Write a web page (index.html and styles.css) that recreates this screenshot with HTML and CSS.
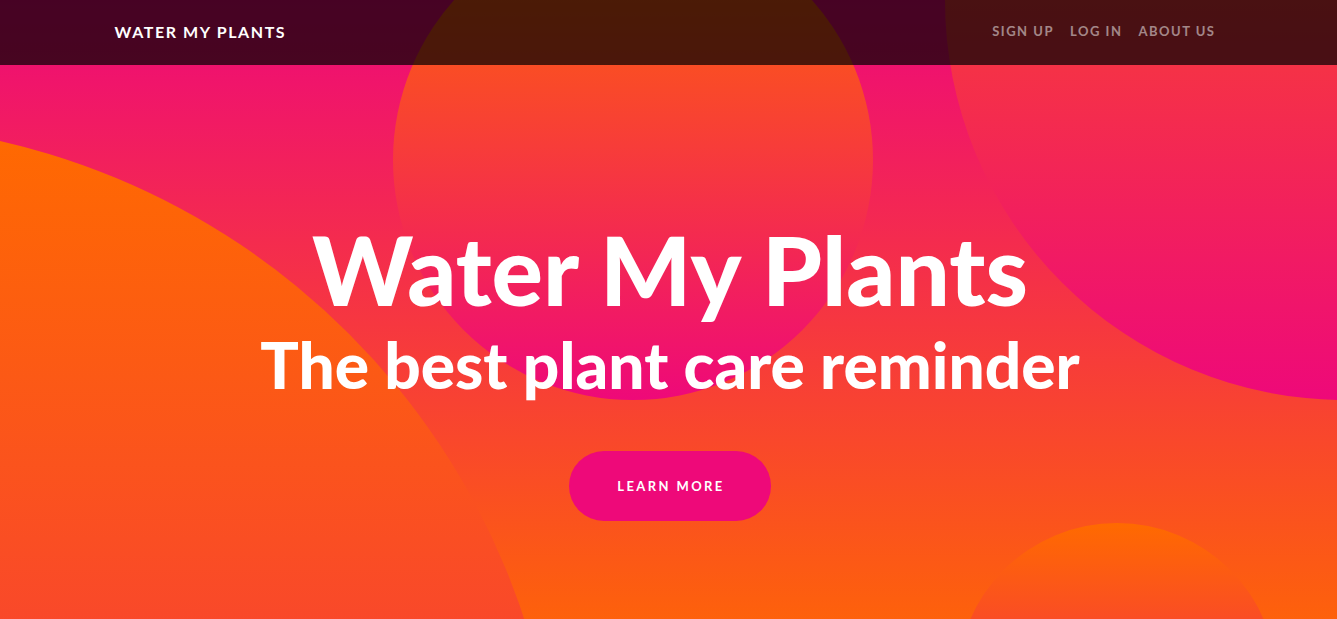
FILE: index.html
```html
<!DOCTYPE html>
<html lang="en">
<head>
<meta charset="utf-8">
<title>Water My Plants</title>
<link rel="stylesheet" href="styles.css">
</head>
<body>
<header class="masthead">
  <div class="bg-circle bg-circle-1"></div>
  <div class="bg-circle bg-circle-2"></div>
  <div class="bg-circle bg-circle-3"></div>
  <div class="bg-circle bg-circle-4"></div>
  <div class="masthead-content">
    <h1 class="masthead-heading">Water My Plants</h1>
    <h2 class="masthead-subheading">The best plant care reminder</h2>
    <a class="btn-learn" href="#">Learn More</a>
  </div>
</header>
<nav class="navbar">
  <div class="nav-container">
    <a class="brand" href="#">Water My Plants</a>
    <ul class="nav-links">
      <li><a href="#">Sign Up</a></li>
      <li><a href="#">Log In</a></li>
      <li><a href="#">About Us</a></li>
    </ul>
  </div>
</nav>
</body>
</html>
```

FILE: styles.css
```css
* { box-sizing: border-box; }
html, body { margin: 0; padding: 0; }
body {
  font-family: Lato, "Liberation Sans", sans-serif;
  background: #fff;
  overflow: hidden;
}
a { text-decoration: none; }

.navbar {
  position: absolute;
  top: 0; left: 0; right: 0;
  height: 65px;
  background: rgba(0, 0, 0, 0.7);
  z-index: 10;
}
.nav-container {
  width: 1140px;
  margin: 0 auto;
  height: 100%;
  padding: 0 15px 1px 16px;
  display: flex;
  align-items: center;
  justify-content: space-between;
}
.brand {
  color: #fff;
  font-weight: 700;
  font-size: 16px;
  letter-spacing: 1.6px;
  text-transform: uppercase;
  line-height: 1;
}
.nav-links {
  list-style: none;
  margin: 0;
  padding: 0 0 2px;
  display: flex;
}
.nav-links a {
  display: block;
  padding: 0 8px;
  color: rgba(255, 255, 255, 0.5);
  font-weight: 700;
  font-size: 13px;
  letter-spacing: 1.5px;
  text-transform: uppercase;
  line-height: 1;
}

.masthead {
  position: relative;
  overflow: hidden;
  height: 683px;
  padding-top: 211px;
  padding-left: 3px;
  background: linear-gradient(0deg, #ff6a00 0%, #ee0979 100%);
}
.bg-circle {
  position: absolute;
  border-radius: 100%;
  background: linear-gradient(0deg, #ee0979 0%, #ff6a00 100%);
  z-index: 0;
}
.bg-circle-1 { width: 1440px; height: 1440px; bottom: -880px; left: -880px; }
.bg-circle-2 { width: 800px; height: 800px; top: -400px; right: -408px; }
.bg-circle-3 { width: 320px; height: 320px; bottom: -160px; right: calc(5% - 7px); }
.bg-circle-4 { width: 480px; height: 480px; top: -80px; right: calc(35% - 4px); }

.masthead-content {
  position: relative;
  z-index: 1;
  display: flex;
  flex-direction: column;
  align-items: center;
  text-align: center;
  color: #fff;
}
.masthead-heading {
  margin: 0;
  font-family: Lato, sans-serif;
  font-weight: 900;
  font-size: 96px;
  line-height: 115px;
}
.masthead-subheading {
  margin: 0;
  font-family: Lato, sans-serif;
  font-weight: 900;
  font-size: 64px;
  line-height: 77px;
}
.btn-learn {
  margin-top: 48px;
  display: inline-block;
  background: #ee0979;
  color: #fff;
  border-radius: 50rem;
  padding: 25px 46px 25px 48px;
  font-size: 13px;
  line-height: 20px;
  font-weight: 700;
  letter-spacing: 2.4px;
  text-transform: uppercase;
}
```
